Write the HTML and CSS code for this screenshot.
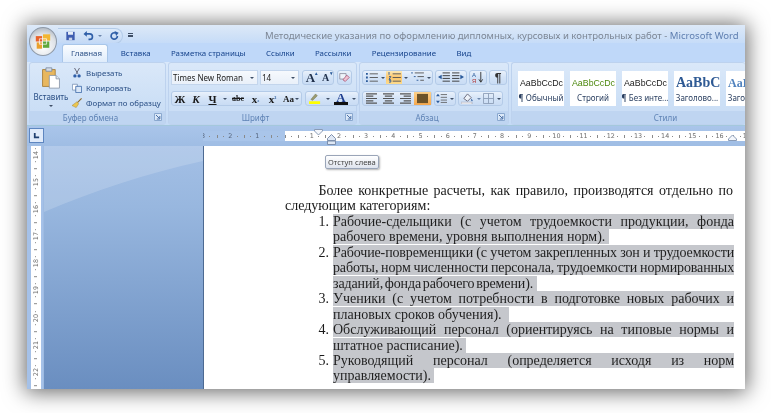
FILE: index.html
```html
<!DOCTYPE html>
<html lang="ru">
<head>
<meta charset="utf-8">
<title>Microsoft Word</title>
<link rel="stylesheet" href="styles.css">
</head>
<body>
<svg class="defs" width="0" height="0">
  <symbol id="launch" viewBox="0 0 8 8"><path d="M.5.5h7v7h-7z" fill="#dbe8f8" stroke="#8aa8cf"/><path d="M2 2l3.500 3.500M5.800 3v3h-3" fill="none" stroke="#4a6fa5"/></symbol>
  <symbol id="bul" viewBox="0 0 14 12"><path d="M1 1h2v2H1zM1 5h2v2H1zM1 9h2v2H1z" fill="#2a5a9a"/><path d="M5 2h9M5 6h9M5 10h9" stroke="#555" fill="none"/></symbol>
  <symbol id="num" viewBox="0 0 14 12"><path d="M1 0v3M1 5h2L1 8h2M1 9h2v2H1" stroke="#2a5a9a" fill="none"/><path d="M5 2h9M5 6h9M5 10h9" stroke="#555" fill="none"/></symbol>
  <symbol id="multi" viewBox="0 0 14 12"><path d="M0 1h2M3 5h2M6 9h2" stroke="#2a5a9a" fill="none"/><path d="M4 1h10M7 5h7M10 9h4" stroke="#555" fill="none"/></symbol>
  <symbol id="outd" viewBox="0 0 14 12"><path d="M6 1h8M6 4h8M6 7h8M6 10h8" stroke="#333" fill="none"/><path d="M5 3v5L1 5.500z" fill="#2a5a9a"/></symbol>
  <symbol id="ind" viewBox="0 0 14 12"><path d="M0 1h8M0 4h8M0 7h8M0 10h8" stroke="#333" fill="none"/><path d="M9 3v5l4-2.500z" fill="#2a5a9a"/></symbol>
  <symbol id="left" viewBox="0 0 14 12"><path d="M1 1h12M1 3.500h8M1 6h12M1 8.500h8M1 11h12" stroke="#555" stroke-width="1.300" fill="none"/></symbol>
  <symbol id="center" viewBox="0 0 14 12"><path d="M1 1h12M3 3.500h8M1 6h12M3 8.500h8M1 11h12" stroke="#555" stroke-width="1.300" fill="none"/></symbol>
  <symbol id="right" viewBox="0 0 14 12"><path d="M1 1h12M5 3.500h8M1 6h12M5 8.500h8M1 11h12" stroke="#555" stroke-width="1.300" fill="none"/></symbol>
  <symbol id="just" viewBox="0 0 14 12"><path d="M1 1h12v10H1z" fill="#6b5228"/></symbol>
  <symbol id="spacing" viewBox="0 0 14 12"><path d="M6 1h8M6 4.500h8M6 8h8M6 11h8" stroke="#555" fill="none"/><path d="M2.500 0L5 3H0zM2.500 12L0 9h5z" fill="#2a5a9a"/></symbol>
  <symbol id="shade" viewBox="0 0 14 12"><path d="M3 6l4-5 4 4-4 4z" fill="#eef3fa" stroke="#667"/><path d="M11 6c2 2 2 3 1 3s-1-1-1-3z" fill="#2a5a9a"/><path d="M0 10h12v2H0z" fill="#fff" stroke="#889" stroke-width=".5"/></symbol>
  <symbol id="border" viewBox="0 0 12 12"><path d="M.5.500h11v11H.500zM6 .5v11M.5 6h11" fill="none" stroke="#8d9fb8"/></symbol>
  <symbol id="sort" viewBox="0 0 14 14"><path d="M10 1v11M8 9l2 3 2-3" stroke="#333" fill="none"/></symbol>
</svg>

<main class="window">
  <header class="titlebar">
    <div class="qat">
      <svg class="qi" viewBox="0 0 12 12"><path d="M1 1h10v10H1z" fill="#3f5db0"/><path d="M3 1h6v3.500H3z" fill="#e6edf8"/><path d="M4 8h4v3H4z" fill="#c9d3e6"/></svg>
      <svg class="qi undo" viewBox="0 0 12 12"><path d="M3 3.500h4.500a3 3 0 0 1 0 6.500H6" fill="none" stroke="#2f5fa8" stroke-width="2"/><path d="M0 3.500L4 0v7z" fill="#2f5fa8"/></svg>
      <span class="caret"></span>
      <svg class="qi redo" viewBox="0 0 12 12"><path d="M9.500 6a3.800 3.800 0 1 1-2-3.400" fill="none" stroke="#2f5fa8" stroke-width="2"/><path d="M6 0l5 2-3 4z" fill="#2f5fa8"/></svg>
    </div>
    <span class="qat-more"></span>
    <h1 class="doc-title">Методические указания по оформлению дипломных, курсовых и контрольных работ - <em>Microsoft Word</em></h1>
  </header>

  <nav class="tabs">
    <span class="tab active">Главная</span>
    <span class="tab">Вставка</span>
    <span class="tab">Разметка страницы</span>
    <span class="tab">Ссылки</span>
    <span class="tab">Рассылки</span>
    <span class="tab">Рецензирование</span>
    <span class="tab">Вид</span>
  </nav>

  <section class="ribbon">
    <div class="group g-clip">
      <div class="gbody clip">
        <div class="paste">
          <svg class="paste-ico" viewBox="0 0 22 26"><path d="M1 3h15v20H1z" fill="#e8b75e" stroke="#a67c35"/><path d="M5 1h7v4H5z" fill="#d6dde8" stroke="#7a8aa0"/><path d="M9 10h8l4 4v11H9z" fill="#fff" stroke="#8a97a8"/><path d="M17 10v4h4" fill="#dfe6ef" stroke="#8a97a8"/></svg>
          <span class="paste-l">Вставить</span>
          <span class="caret dark"></span>
        </div>
        <div class="clip-list">
          <div class="clip-row"><svg class="ci" viewBox="0 0 12 12"><path d="M3 0l4 7M9 0L5 7" stroke="#556" fill="none"/><circle cx="3.500" cy="9.500" r="2" fill="#2f5fa8"/><circle cx="8.500" cy="9.500" r="2" fill="#2f5fa8"/></svg>Вырезать</div>
          <div class="clip-row"><svg class="ci" viewBox="0 0 12 12"><path d="M.5 1.500h6v7h-6z" fill="#fff" stroke="#7a93b5"/><path d="M4.500 4h7v7.500h-7z" fill="#d8e6f7" stroke="#3f6aa8"/></svg>Копировать</div>
          <div class="clip-row"><svg class="ci" viewBox="0 0 12 12"><path d="M11 0L6 5l1 1 5-5z" fill="#8c6a2f"/><path d="M6 4.500L8 7l-3 4.500L0 9z" fill="#ecc64f" stroke="#9a7a25" stroke-width=".5"/></svg>Формат по образцу</div>
        </div>
      </div>
      <footer class="gcap">Буфер обмена<svg class="launch"><use href="#launch"/></svg></footer>
    </div>

    <div class="group g-font">
      <div class="gbody rows">
        <div class="row">
          <span class="combo c-name">Times New Roman<i class="caret dark"></i></span>
          <span class="combo c-size">14<i class="caret dark"></i></span>
          <span class="bset"><b class="btn w15 serif big">A<i class="sup">▴</i></b><b class="btn w15 serif small">A<i class="sup">▾</i></b></span>
          <span class="bset"><b class="btn w13 clear"><svg class="ico" viewBox="0 0 14 12"><path d="M1 1h8v7H1z" fill="#eef3fa" stroke="#889"/><path d="M5 9l5-6 3 3-5 5z" fill="#efc3d3" stroke="#a57"/></svg></b></span>
        </div>
        <div class="row">
          <span class="bset">
            <b class="btn w16 serif">Ж</b><b class="btn w16 serif it">К</b><b class="btn w17 serif un">Ч</b><b class="btn w8"><i class="caret dark"></i></b>
            <b class="btn w18 serif strike">abc</b><b class="btn w17 serif">x<i class="subs">₂</i></b><b class="btn w17 serif">x<i class="subs">²</i></b><b class="btn w20 serif aa">Аа<i class="caret dark"></i></b>
          </span>
          <span class="bset">
            <b class="btn w18"><svg class="ico" viewBox="0 0 14 12"><path d="M2 7l5-6 2 2-5 5z" fill="#9a9a70" stroke="#6b6b40" stroke-width=".5"/><path d="M0 9h12v3H0z" fill="#ffff00"/></svg></b><b class="btn w8"><i class="caret dark"></i></b>
            <b class="btn w18 serif colorA">А</b><b class="btn w8"><i class="caret dark"></i></b>
          </span>
        </div>
      </div>
      <footer class="gcap">Шрифт<svg class="launch"><use href="#launch"/></svg></footer>
    </div>

    <div class="group g-par">
      <div class="gbody rows">
        <div class="row">
          <span class="bset">
            <b class="btn w16"><svg class="ico"><use href="#bul"/></svg></b><b class="btn w7"><i class="caret dark"></i></b>
            <b class="btn w16 on"><svg class="ico"><use href="#num"/></svg></b><b class="btn w7"><i class="caret dark"></i></b>
            <b class="btn w16"><svg class="ico"><use href="#multi"/></svg></b><b class="btn w7"><i class="caret dark"></i></b>
          </span>
          <span class="bset"><b class="btn w15"><svg class="ico"><use href="#outd"/></svg></b><b class="btn w15"><svg class="ico"><use href="#ind"/></svg></b></span>
          <span class="bset"><b class="btn w16 sort">А<i>Я</i><svg class="sorti"><use href="#sort"/></svg></b></span>
          <span class="bset"><b class="btn w16 pil">¶</b></span>
        </div>
        <div class="row">
          <span class="bset">
            <b class="btn w17"><svg class="ico"><use href="#left"/></svg></b><b class="btn w17"><svg class="ico"><use href="#center"/></svg></b><b class="btn w17"><svg class="ico"><use href="#right"/></svg></b><b class="btn w17 on strong"><svg class="ico"><use href="#just"/></svg></b>
          </span>
          <span class="bset"><b class="btn w13"><svg class="ico"><use href="#spacing"/></svg></b><b class="btn w7"><i class="caret dark"></i></b></span>
          <span class="bset"><b class="btn w16"><svg class="ico"><use href="#shade"/></svg></b><b class="btn w7"><i class="caret"></i></b><b class="btn w13"><svg class="ico"><use href="#border"/></svg></b><b class="btn w7"><i class="caret dark"></i></b></span>
        </div>
      </div>
      <footer class="gcap">Абзац<svg class="launch"><use href="#launch"/></svg></footer>
    </div>

    <div class="group g-styles">
      <div class="gbody gallery">
        <div class="tile"><span class="sample">AaBbCcDc</span><span class="sname">¶ Обычный</span></div>
        <div class="tile"><span class="sample green">AaBbCcDc</span><span class="sname">Строгий</span></div>
        <div class="tile"><span class="sample">AaBbCcDc</span><span class="sname">¶ Без инте...</span></div>
        <div class="tile"><span class="sample h1">AaBbC</span><span class="sname">Заголово...</span></div>
        <div class="tile"><span class="sample h2">AaBbC</span><span class="sname">Заголово...</span></div>
      </div>
      <footer class="gcap">Стили</footer>
    </div>
  </section>

  <div class="rulerbar">
    <span class="tabstop"><svg viewBox="0 0 8 8"><path d="M2 1v5h5" fill="none" stroke="#1f3f70" stroke-width="2"/></svg></span>
    <div class="hruler">
      <span class="rc m lead">3</span><span class="rc m">2</span><span class="rc m">1</span><span class="rc m half"></span>
      <span class="rc half"></span><span class="rc">1</span><span class="rc">2</span><span class="rc">3</span><span class="rc">4</span><span class="rc">5</span><span class="rc">6</span><span class="rc">7</span><span class="rc">8</span><span class="rc">9</span><span class="rc">10</span><span class="rc">11</span><span class="rc">12</span><span class="rc">13</span><span class="rc">14</span><span class="rc">15</span><span class="rc">16</span><span class="rc">17</span>
      <svg class="ind-top" viewBox="0 0 9 7"><path d="M.5.500h8V2L4.500 6 .5 2z" fill="#f4f7fc" stroke="#8a9bb5"/></svg>
      <svg class="ind-left" viewBox="0 0 9 11"><path d="M.5 4.500l4-4 4 4v2h-8z M.5 7h8v3.500h-8z" fill="#dfe8f5" stroke="#7d8fac"/></svg>
      <svg class="ind-right" viewBox="0 0 9 7"><path d="M.5 6.500h8V5L4.500 1 .5 5z" fill="#f4f7fc" stroke="#8a9bb5"/></svg>
    </div>
  </div>

  <div class="workspace">
    <aside class="vruler">
      <div class="vstrip">
        <span class="vc">14</span><span class="vc">15</span><span class="vc">16</span><span class="vc">17</span><span class="vc">18</span><span class="vc">19</span><span class="vc">20</span><span class="vc">21</span><span class="vc">22</span>
      </div>
    </aside>
    <div class="desk">
      <svg class="swoosh" viewBox="0 0 159 243" preserveAspectRatio="none"><path d="M0 0h159v15C100 28 50 45 0 66z" fill="#fff" fill-opacity=".17"/></svg>
    </div>
    <article class="page">
      <p class="para"><span class="indent"></span>Более конкретные расчеты, как правило, производятся отдельно по следующим категориям:</p>
      <div class="item"><span class="n">1.</span><p><mark>Рабочие-сдельщики (с учетом трудоемкости продукции, фонда рабочего времени, уровня выполнения норм).&nbsp;</mark></p></div>
      <div class="item tight"><span class="n">2.</span><p><mark>Рабочие-повременщики (с учетом закрепленных зон и трудоемкости работы, норм численности персонала, трудоемкости нормированных заданий, фонда рабочего времени).&nbsp;&nbsp;</mark></p></div>
      <div class="item"><span class="n">3.</span><p><mark>Ученики (с учетом потребности в подготовке новых рабочих и плановых сроков обучения).&nbsp;&nbsp;</mark></p></div>
      <div class="item"><span class="n">4.</span><p><mark>Обслуживающий персонал (ориентируясь на типовые нормы и штатное расписание).&nbsp;</mark></p></div>
      <div class="item"><span class="n">5.</span><p><mark>Руководящий персонал (определяется исходя из норм управляемости).&nbsp;</mark></p></div>
    </article>
  </div>

  <div class="tooltip">Отступ слева</div>
  <div class="orb">
    <svg viewBox="0 0 20 20"><path d="M2 4h7v6H2z" fill="#e8622a"/><path d="M10 2h8v7h-8z" fill="#f2b632"/><path d="M3 11h6v7H3z" fill="#e9a02c"/><path d="M10 10h7v7h-7z" fill="#5fa83a"/><path d="M6 7h8v6H6z" fill="none" stroke="#fff" stroke-width=".8"/></svg>
  </div>
</main>
</body>
</html>
```

FILE: styles.css
```css
html, body { margin: 0; padding: 0; height: 413px; overflow: hidden; background: #fff; }
.defs { position: absolute; }
body { font-family: "Noto Sans", "DejaVu Sans", sans-serif; }

.window {
  position: relative;
  width: 718px;
  height: 364px;
  margin: 25px 0 0 27px;
  display: flex;
  flex-direction: column;
  background: #bfd7f6;
  box-shadow: 0 1px 20px 2px rgba(0,0,0,.6);
  overflow: hidden;
}
.window > * { filter: blur(.3px); }

/* title */
.titlebar {
  height: 18px;
  flex: none;
  display: flex;
  align-items: center;
  padding-left: 31px;
  background: linear-gradient(#dde9f8, #cfe1f7 60%, #c6dcf8);
}
.qat {
  height: 16px;
  width: 65px;
  display: flex;
  align-items: center;
  gap: 4px;
  padding-left: 7px;
  box-sizing: border-box;
  border-radius: 0 9px 9px 0;
  background: linear-gradient(#dceafa, #c4d9f5);
  border: 1px solid #b3cbe8;
  border-left: 0;
  margin-top: 3px;
}
.qi { width: 11px; height: 10px; }
.qi.undo { margin-left: 3px; }
.qi.redo { margin-left: 3px; }
.caret { display: inline-block; width: 0; height: 0; border: 2px solid transparent; border-top: 2px solid #6c86ab; border-bottom: 0; }
.caret.dark { border-top-color: #3f4f66; }
.qat-more { width: 5px; height: 4px; margin: 2px 0 0 5px; border-top: 1px solid #3f4f66; border-bottom: 2px solid #3f4f66; box-sizing: border-box; }
.doc-title {
  margin: 3px 0 0 132px;
  font-size: 9.55px;
  font-weight: 400;
  color: #7d8795;
  white-space: nowrap;
}
.doc-title em { font-style: normal; color: #5f7fb0; }

/* tabs */
.tabs {
  height: 19px;
  flex: none;
  display: flex;
  align-items: flex-end;
  gap: 0;
  padding-left: 35px;
  background: #bfd8f9;
}
.tab {
  height: 18px;
  line-height: 19px;
  padding: 0 10.2px;
  font-size: 7.9px;
  color: #15428b;
  box-sizing: border-box;
}
.tab.active {
  padding: 0 8px;
  width: 46px;
  margin-right: 2.5px;
  text-align: center;
  color: #2a4f85;
  background: linear-gradient(#fbfdff, #dfecfb);
  border: 1px solid #a9c6e8;
  border-bottom: 0;
  border-radius: 3px 3px 0 0;
  line-height: 17px;
}

/* ribbon */
.ribbon {
  height: 64px;
  flex: none;
  display: flex;
  gap: 2px;
  padding: 0 0 0 2px;
  box-sizing: border-box;
  background: linear-gradient(#d9e8fa, #c5dbf6);
  border-bottom: 1px solid #a4c8dc;
}
.group {
  display: flex;
  flex-direction: column;
  box-sizing: border-box;
  border: 1px solid #bdd2ee;
  border-radius: 3px;
  background: linear-gradient(#dae8f9, #cde0f6 60%, #c8dcf5);
}
.g-clip { width: 137px; }
.g-font { width: 189px; }
.g-par { width: 150px; }
.g-styles { flex: 1; min-width: 0; border-right: 0; }
.gbody { flex: 1; min-height: 0; }
.gcap {
  position: relative;
  height: 13px;
  flex: none;
  line-height: 13px;
  box-sizing: border-box;
  padding-right: 14px;
  text-align: center;
  font-size: 8px;
  color: #5f83b5;
  background: #bfd5f1;
}
.g-styles .gcap { padding: 0 0 0 74px; }
.launch { position: absolute; right: 3px; top: 2px; width: 8px; height: 8px; }

/* clipboard */
.clip { display: flex; padding-left: 3px; }
.paste { width: 36px; display: flex; flex-direction: column; align-items: center; padding-top: 4px; }
.paste-ico { width: 20px; height: 22px; }
.paste-l { font-size: 8px; line-height: 10px; margin-top: 3px; color: #2a4f85; }
.paste .caret { margin-top: 3px; }
.clip-list { display: flex; flex-direction: column; padding: 2px 0 0 3px; }
.clip-row { display: flex; align-items: center; gap: 4px; height: 16px; font-size: 7.9px; color: #2a4f85; white-space: nowrap; }
.ci { width: 10px; height: 10px; flex: none; }

/* rows */
.rows { display: flex; flex-direction: column; gap: 6px; padding: 7px 0 0 2px; }
.row { display: flex; gap: 3px; height: 15px; }
.g-par .rows { padding-left: 2px; }
.g-par .row { gap: 2px; }
.combo {
  position: relative;
  display: block;
  height: 15px;
  box-sizing: border-box;
  padding-left: 1px;
  line-height: 13px;
  font-size: 8px;
  color: #222;
  background: linear-gradient(#f6f9fd, #e9f0f9);
  border: 1px solid #c3d5ec;
  white-space: nowrap;
}
.combo .caret { position: absolute; right: 3px; top: 6px; }
.c-name { width: 87px; }
.c-size { width: 39px; margin-left: -1px; }
.bset {
  display: flex;
  height: 15px;
  box-sizing: border-box;
  border: 1px solid #b4cbe8;
  border-radius: 3px;
  background: linear-gradient(#e9f1fb, #d3e3f7 50%, #c9dcf4);
}
.btn {
  display: flex;
  align-items: center;
  justify-content: center;
  position: relative;
  font-size: 9px;
  font-weight: 400;
  color: #223;
  box-sizing: border-box;
  height: 13px;
}
.w7 { width: 7px; }
.w8 { width: 8px; }
.w13 { width: 13px; }
.w15 { width: 15px; }
.w16 { width: 16px; }
.w17 { width: 17px; }
.w18 { width: 18px; }
.w20 { width: 20px; }
.w13 .ico { width: 11px; }
.serif { font-family: "Liberation Serif", serif; font-weight: 700; font-size: 11px; color: #1a1a1a; }
.big { font-size: 13px; color: #1f2f4a; }
.small { font-size: 10px; color: #1f2f4a; }
.sup { position: absolute; top: -1px; right: 0; font-size: 5px; font-style: normal; color: #2a5a9a; }
.it { font-style: italic; }
.un { text-decoration: underline; }
.strike { text-decoration: line-through; font-size: 8px; }
.subs { font-size: 7px; font-style: normal; color: #2a5a9a; }
.aa { font-size: 9px; gap: 1px; }
.colorA { font-size: 13px; color: #1f3f90; border-bottom: 3px solid #111; line-height: 9px; margin: 0 2px; width: 14px; }
.ico { width: 13px; height: 11px; display: block; }
.on { background: linear-gradient(#fde9b5, #fbc56b 50%, #fddc8e); }
.strong { background: linear-gradient(#fcd18a, #f5a84d); }
.sort { font-family: "Liberation Sans", sans-serif; font-size: 6px; line-height: 6px; flex-direction: column; align-items: flex-start; padding-left: 2px; color: #2a5a9a; }
.sort i { font-style: normal; color: #b03a3a; }
.sorti { position: absolute; width: 14px; height: 13px; left: 1px; top: 0; }
.pil { font-size: 12px; color: #333; font-family: "Liberation Sans", sans-serif; font-weight: 700; }

/* gallery */
.gallery {
  display: flex;
  gap: 6px;
  padding: 8px 0 0 6px;
  overflow: hidden;
  background: transparent;
}
.tile {
  width: 46px;
  height: 35px;
  flex: none;
  background: #fff;
  display: flex;
  flex-direction: column;
  align-items: center;
  overflow: hidden;
  white-space: nowrap;
}
.sample { height: 22px; line-height: 24px; font-size: 8.8px; color: #222; width: 46px; padding-left: 2px; box-sizing: border-box; overflow: hidden; font-family: "Liberation Sans", sans-serif; }
.sample.green { color: #4f8a10; }
.sample.h1 { font-family: "Liberation Serif", serif; font-weight: 700; font-size: 14px; color: #2f5a94; }
.sample.h2 { font-family: "Liberation Serif", serif; font-weight: 700; font-size: 12px; color: #4f81bd; }
.sname { font-size: 8px; line-height: 10px; color: #2a3f60; }

/* rulers */
.rulerbar {
  height: 20px;
  flex: none;
  display: flex;
  background: linear-gradient(#a9c5ea, #9fbde4);
}
.tabstop {
  width: 15px;
  height: 15px;
  margin: 2px 0 0 2px;
  flex: none;
  box-sizing: border-box;
  padding: 3px;
  background: #dfeafa;
  border: 1px solid #5e86c0;
}
.tabstop svg { display: block; width: 7px; height: 7px; }
.hruler {
  position: relative;
  flex: 1;
  display: flex;
  margin: 5px 0 0 159px;
  height: 10px;
  clip-path: inset(-6px 0 -8px 0);
}
.rc {
  flex: none;
  width: 27.2px;
  height: 10px;
  line-height: 10px;
  text-align: center;
  font-size: 6.4px;
  color: #6e6e6e;
  font-family: "DejaVu Sans", sans-serif;
  background-color: #fff;
  background-image:
    linear-gradient(#8a8a8a, #8a8a8a),
    linear-gradient(#8a8a8a, #8a8a8a),
    linear-gradient(#8a8a8a, #8a8a8a);
  background-repeat: no-repeat;
  background-size: 1px 3px, 1px 1px, 1px 1px;
  background-position: 0 4px, 6.5px 5px, 20px 5px;
}
.rc.m { background-color: #a9c5ea; color: #55657d; }
.rc.lead { margin-left: -13.6px; }
.rc.half { width: 13.6px; background-size: 1px 3px, 1px 1px, 0 0; }
.ind-top { position: absolute; left: 111px; top: -2px; width: 9px; height: 7px; }
.ind-left { position: absolute; left: 124px; top: 3px; width: 9px; height: 11px; }
.ind-right { position: absolute; left: 525px; top: 3px; width: 9px; height: 7px; }

/* workspace */
.workspace { flex: 1; min-height: 0; display: flex; background: #fff; }
.vruler {
  width: 17px;
  flex: none;
  background: #a5c1e8;
  padding-left: 4px;
  box-sizing: border-box;
  border-right: 1px solid #9ebbe2;
}
.vstrip {
  width: 10px;
  height: 100%;
  background: #fff;
  overflow: hidden;
}
.vc {
  display: block;
  height: 27.2px;
  line-height: 10px;
  width: 10px;
  text-align: center;
  font-size: 6.4px;
  color: #6e6e6e;
  writing-mode: vertical-rl;
  transform: rotate(180deg);
  font-family: "DejaVu Sans", sans-serif;
  background-image:
    linear-gradient(#8a8a8a, #8a8a8a),
    linear-gradient(#8a8a8a, #8a8a8a),
    linear-gradient(#8a8a8a, #8a8a8a);
  background-repeat: no-repeat;
  background-size: 3px 1px, 1px 1px, 1px 1px;
  background-position: 4px 0, 5px 6.5px, 5px 20px;
}
.vc:first-child { margin-top: -4.5px; }
.desk {
  width: 159px;
  flex: none;
  position: relative;
  background: linear-gradient(#a4c0e6, #98b7df 25%, #6a8ec0);
  border-right: 1px solid #4d6a92;
  box-sizing: content-box;
}
.swoosh { display: block; width: 100%; height: 100%; }
.page {
  flex: 1;
  min-width: 0;
  padding: 37px 12px 0 81px;
  background: #fff;
  font-family: "Liberation Serif", serif;
  font-size: 14px;
  line-height: 15.45px;
  color: #1a1a1a;
  text-align: justify;
}
.para { margin: 0; }
.indent { display: inline-block; width: 33.5px; }
.item { display: flex; }
.n { width: 44px; flex: none; text-align: right; }
.item p { margin: 0 0 0 4px; width: 401px; flex: none; }
.tight p { word-spacing: -1.6px; letter-spacing: -.13px; }
mark { background: #c5c7cc; color: #1f1f1f; }

/* overlays */
.tooltip {
  position: absolute;
  left: 298px;
  top: 130px;
  height: 14px;
  padding: 0 2px;
  line-height: 13px;
  font-size: 7.6px;
  color: #444;
  background: linear-gradient(#fff, #dfe4ee);
  border: 1px solid #9aa5b8;
  border-radius: 2px;
  box-sizing: border-box;
  white-space: nowrap;
  box-shadow: 1px 1px 2px rgba(0,0,0,.3);
}
.orb {
  position: absolute;
  left: 2px;
  top: 2px;
  width: 28px;
  height: 29px;
  box-sizing: border-box;
  padding: 4px;
  border-radius: 50%;
  background: radial-gradient(circle at 50% 70%, #fff, #dfe3e8 55%, #9aa3ad);
  border: 1px solid #8f9aa8;
}
.orb svg { display: block; width: 100%; height: 100%; }
```
